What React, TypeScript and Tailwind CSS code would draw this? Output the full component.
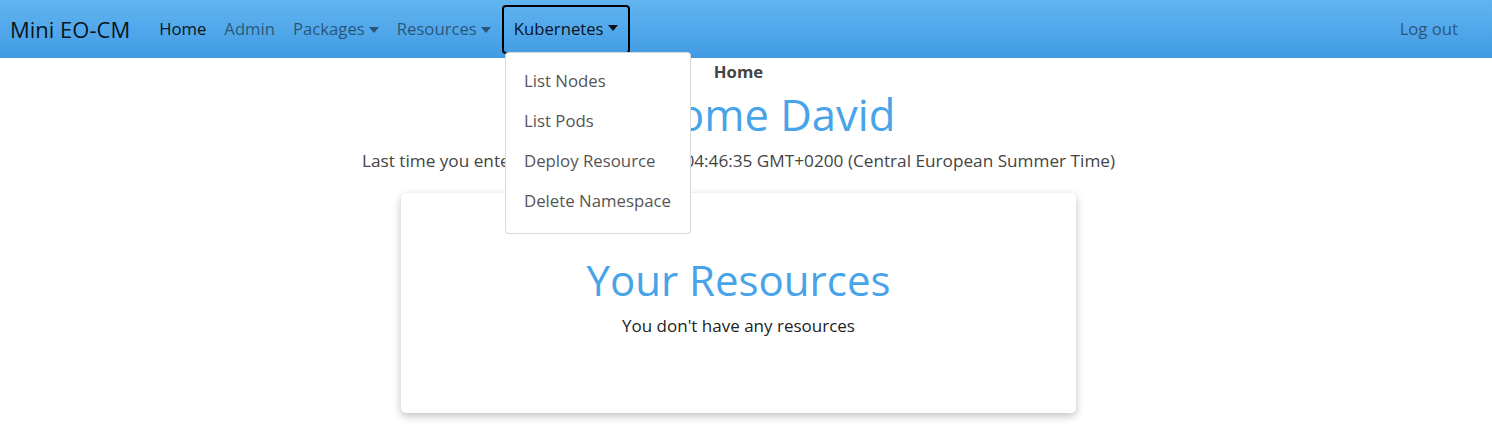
import React from 'react';

const Caret = () => (
  <span className="ml-[4px] inline-block align-middle border-t-[6px] border-x-[5px] border-x-transparent border-t-current mb-[3px]" />
);

const kubeItems = ['List Nodes', 'List Pods', 'Deploy Resource', 'Delete Namespace'];

export default function App() {
  return (
    <div className="relative min-h-[438px] bg-white text-[#212529]" style={{ fontFamily: '"Open Sans", "Noto Sans", sans-serif' }}>
      {/* navbar */}
      <nav className="h-[58px] flex items-center bg-gradient-to-b from-[#61b4f0] to-[#419be3] pl-[10px] pr-[34px]">
        <span className="text-[22px] text-black/90 mr-[20px]">Mini EO-CM</span>
        <div className="flex items-center text-[16.7px]">
          <span className="px-[9px] text-black/90">Home</span>
          <span className="px-[9px] text-black/50">Admin</span>
          <span className="px-[9px] text-black/50">Packages<Caret /></span>
          <span className="px-[9px] text-black/50">Resources<Caret /></span>
          <span className="ml-[2px] h-[49px] flex items-center px-[10px] border-2 border-black rounded-[4px] text-black/90">
            Kubernetes<Caret />
          </span>
        </div>
        <span className="ml-auto text-[16.7px] text-black/50">Log out</span>
      </nav>

      {/* main */}
      <main className="mr-[15px] flex flex-col items-center">
        <div className="mt-[2px] text-[16.7px] leading-[24px] font-bold text-[#444]">Home</div>
        <h1 className="text-[43.5px] leading-[62px] text-[#49a3e9]">Welcome David</h1>
        <p className="mt-[2px] text-[17.2px] leading-[26px] text-[#444]">
          Last time you entered: Wed Jun 15 2022 04:46:35 GMT+0200 (Central European Summer Time)
        </p>
        <div className="mt-[19px] w-[675px] h-[220px] rounded-[5px] bg-white shadow-[0_3px_8px_rgba(0,0,0,0.25)] flex flex-col items-center pt-[61px]">
          <h2 className="text-[42px] leading-[52px] text-[#49a3e9]">Your Resources</h2>
          <p className="mt-[7px] text-[17px] leading-[26px] text-[#222]">You don't have any resources</p>
        </div>
      </main>

      {/* dropdown */}
      <div className="absolute left-[505px] top-[52px] w-[186px] bg-white border border-black/15 rounded-[4px] pt-[8px] pb-[12px]">
        {kubeItems.map((t) => (
          <div key={t} className="h-[40px] flex items-center px-[18px] text-[16.8px] text-[#555]">
            {t}
          </div>
        ))}
      </div>
    </div>
  );
}
